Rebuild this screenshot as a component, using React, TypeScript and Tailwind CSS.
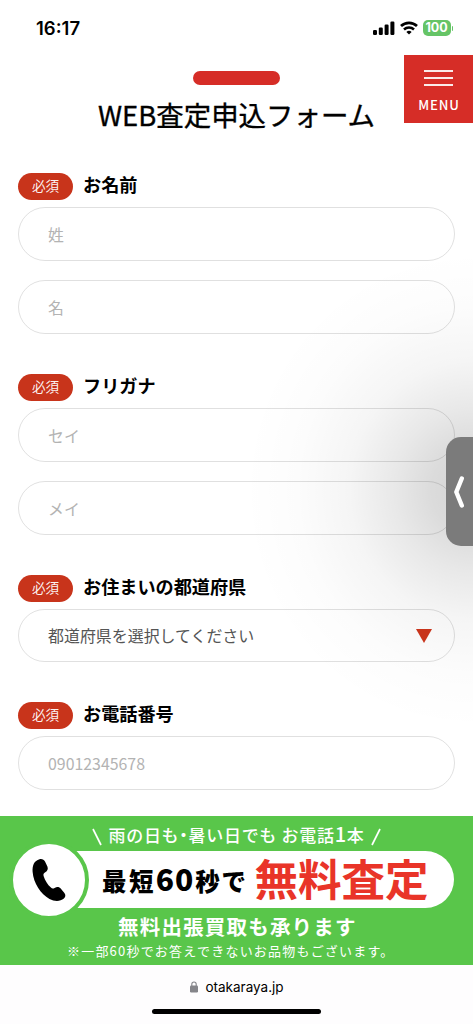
import clsx from "clsx";

function StatusBar() {
  return (
    <header className="flex h-[55px] items-start justify-between pl-9 pr-5 pt-4">
      <time className="font-['Inter'] text-[18.5px] font-semibold leading-6">
        16:17
      </time>
      <div className="flex h-6 items-center gap-[5px]">
        <svg width="22" height="14" viewBox="0 0 22 14">
          <rect x="0" y="9" width="4" height="5" rx="1.2" />
          <rect x="5.8" y="6.5" width="4" height="7.5" rx="1.2" />
          <rect x="11.6" y="3.5" width="4" height="10.5" rx="1.2" />
          <rect x="17.4" y="0.5" width="4" height="13.5" rx="1.2" />
        </svg>
        <svg width="18" height="14" viewBox="0 0 18 14" fill="none" stroke="#000">
          <path d="M1 5.1a11.6 11.6 0 0 1 16 0" strokeWidth="2.7" />
          <path d="M4 8.5a7.2 7.2 0 0 1 10 0" strokeWidth="2.5" />
          <path d="M9 13.6 6.4 11a3.8 3.8 0 0 1 5.2 0z" fill="#000" stroke="none" />
        </svg>
        <div className="flex items-center gap-px">
          <span className="flex h-4 w-7 items-center justify-center rounded-[5px] bg-[#65c466] font-['Inter'] text-[12.5px] font-bold leading-4 text-white">
            100
          </span>
          <span className="h-[5px] w-[1.5px] rounded-r-full bg-[#65c466]" />
        </div>
      </div>
    </header>
  );
}

function MenuButton() {
  return (
    <button className="absolute right-0 top-[55px] flex h-[68px] w-[69px] flex-col items-center bg-[#d62d27] pt-[15px] text-white">
      <span className="flex w-[29px] flex-col gap-[5px]">
        <span className="h-[2px] bg-white/90" />
        <span className="h-[2px] bg-white/90" />
        <span className="h-[2px] bg-white/90" />
      </span>
      <span className="mt-[9px] pl-px text-[13.2px] font-medium leading-5 tracking-[0.8px]">
        MENU
      </span>
    </button>
  );
}

function Field({
  label,
  className,
  children,
}: {
  label: string;
  className?: string;
  children: React.ReactNode;
}) {
  return (
    <section className={className}>
      <div className="flex h-[34px] items-start">
        <span className="flex h-[27px] w-[55px] items-center justify-center rounded-full bg-[#c8341b] pb-[3px] text-[13.6px] text-white/95">
          必須
        </span>
        <label className="-mt-[2px] ml-[10px] text-[18.15px] font-bold leading-[26px]">
          {label}
        </label>
      </div>
      <div className="flex flex-col gap-[19px]">{children}</div>
    </section>
  );
}

function TextInput({ placeholder }: { placeholder: string }) {
  return (
    <input
      className="h-[54px] w-full rounded-full border border-black/12 bg-transparent px-[29px] text-[15.9px] placeholder:text-[#b3b3b3]"
      placeholder={placeholder}
    />
  );
}

function Banner() {
  return (
    <div className="h-[149px] bg-[#59c64a] pt-[6px] text-white">
      <div className="flex h-[29px] items-center justify-between whitespace-nowrap px-[92px]">
        <svg width="10" height="18" viewBox="0 0 10 18" stroke="#fff" strokeWidth="1.7">
          <path d="M1 1l8 16" />
        </svg>
        <p className="-mt-[3px] text-[17px] font-medium leading-6 tracking-[0.7px]">
          雨の日も
          <span className="[font-feature-settings:'halt']">・</span>
          暑い日でも お電話
          <span className="text-[20px] leading-5">1</span>本
        </p>
        <svg width="10" height="18" viewBox="0 0 10 18" stroke="#fff" strokeWidth="1.7">
          <path d="M9 1L1 17" />
        </svg>
      </div>

      <div className="relative ml-[49px] mr-[19px] flex h-[57px] items-center whitespace-nowrap rounded-r-full bg-white pl-[53px]">
        <div className="absolute -left-[40px] -top-[11px] flex size-20 items-center justify-center rounded-full border-[4.5px] border-[#59c64a] bg-white">
          <svg width="34" height="44" viewBox="0 0 34 44">
            <path d="M7.5 1.2C10 .6 12 1.600 13 3.600l2.400 4.900c1 2.400.1 4.600-2.100 5.800-1.600.8-2.200 1.800-1.700 3.600 1.300 4.400 4 8.500 7.300 11.700 1.200 1.100 2.300 1 3.700.3 2.700-1.300 4.600-1 6.500 1.100l3.300 4c1.500 2.100 1.200 4-.5 5.500-3.600 3-9.200 3.200-14.400.4C8.700 36 1.500 25.300.6 13.800.2 7.200 2.300 2.600 7.500 1.200z" />
          </svg>
        </div>
        <span className="-mt-[2px] flex items-baseline text-[24.5px] font-black leading-none text-black">
          <span className="tracking-[2.4px]">最短</span>
          <span className="text-[30px] tracking-[1px]">60</span>
          <span className="ml-px tracking-[1.6px]">秒で</span>
        </span>
        <span className="-mt-1 ml-[7px] text-[43.5px] font-bold leading-[57px] text-[#e93428]">
          無料査定
        </span>
      </div>

      <p className="ml-[118px] mt-1 whitespace-nowrap text-[20.5px] font-bold leading-7 tracking-[1.2px]">
        無料出張買取も承ります
      </p>
      <p className="ml-[67px] mt-[2px] whitespace-nowrap text-[13px] leading-[18px] tracking-[1.2px]">
        ※一部60秒でお答えできないお品物もございます。
      </p>
    </div>
  );
}

function BrowserBar() {
  return (
    <footer className="flex h-[59px] flex-col items-center bg-[#fefdfe] pt-[12px]">
      <div className="flex h-5 items-center gap-[7px] pl-px font-['Inter'] text-[13.5px]">
        <svg width="8" height="12" viewBox="0 0 8 12" fill="#85858a">
          <rect x="0" y="4.5" width="8" height="7" rx="1.2" />
          <path d="M1.8 5.5V3.2a2.2 2.2 0 0 1 4.4 0v2.3" fill="none" stroke="#85858a" strokeWidth="1.1" />
        </svg>
        otakaraya.jp
      </div>
      <div className="mt-[12px] h-[5px] w-[169px] rounded-full bg-black" />
    </footer>
  );
}

export default function App() {
  return (
    <div
      className={clsx(
        "relative flex h-[1024px] w-[473px] flex-col overflow-hidden bg-white text-black",
        "font-['Noto_Sans_CJK_JP','Noto_Sans',sans-serif]",
      )}
    >
      {/* soft shadow around the side tab */}
      <div className="pointer-events-none absolute right-0 top-[240px] h-[500px] w-[260px] bg-[radial-gradient(ellipse_230px_240px_at_100%_50%,rgba(0,0,0,0.17)_0%,rgba(0,0,0,0.14)_18%,rgba(0,0,0,0.09)_34%,rgba(0,0,0,0.04)_54%,rgba(0,0,0,0.012)_77%,transparent_100%)]" />
      <StatusBar />
      <MenuButton />

      <div className="flex h-[118px] flex-col items-center pt-[16px]">
        <div className="h-[14px] w-[87px] rounded-full bg-[#d62d27]" />
        <h1 className="mt-[9px] whitespace-nowrap text-[27.45px] leading-10 [-webkit-text-stroke:0.35px_#000]">
          WEB査定申込フォーム
        </h1>
      </div>

      <main className="relative flex-1 px-[18px]">
        <Field label="お名前">
          <TextInput placeholder="姓" />
          <TextInput placeholder="名" />
        </Field>
        <Field label="フリガナ" className="mt-[40px]">
          <TextInput placeholder="セイ" />
          <TextInput placeholder="メイ" />
        </Field>
        <Field label="お住まいの都道府県" className="mt-[40px]">
          <button className="flex h-[53px] w-full items-center justify-between rounded-full border border-black/12 pl-[29px] pr-[22px] text-[15.95px] text-[#555]">
            都道府県を選択してください
            <svg width="16" height="14" viewBox="0 0 16 14" fill="#c8341b">
              <path d="M0 0h16L8 14z" />
            </svg>
          </button>
        </Field>
        <Field label="お電話番号" className="mt-[40px]">
          <TextInput placeholder="09012345678" />
        </Field>
      </main>

      <button className="absolute right-0 top-[437px] flex h-[109px] w-[27px] items-center justify-center rounded-l-[15px] bg-[#7b7b7b]">
        <svg className="mr-[2px]" width="10" height="32" viewBox="0 0 10 32" fill="none" stroke="#fff" strokeWidth="4.4" strokeLinecap="round" strokeLinejoin="round">
          <path d="M7.8 2.5L2.3 16l5.5 13.5" />
        </svg>
      </button>

      <Banner />
      <BrowserBar />
    </div>
  );
}
